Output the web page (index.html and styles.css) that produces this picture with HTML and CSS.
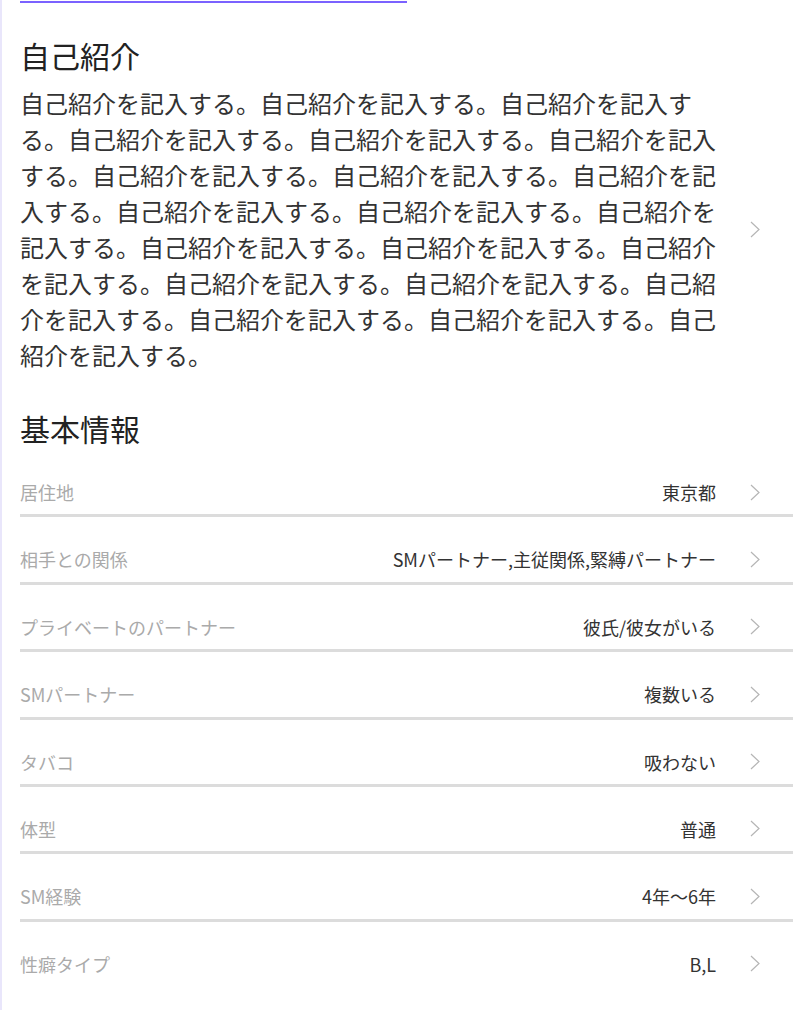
FILE: index.html
```html
<!DOCTYPE html>
<html lang="ja">
<head>
    <meta charset="UTF-8">
    <meta name="viewport" content="width=device-width, initial-scale=1.0">
    <title>プロフィール</title>
    <link rel="stylesheet" href="styles.css">
</head>
<body>
    <div class="page">
        <div class="tabs">
            <div class="tab active"></div>
            <div class="tab"></div>
        </div>

        <section class="intro">
            <h2>自己紹介</h2>
            <div class="intro-row">
                <p class="intro-text">自己紹介を記入する。自己紹介を記入する。自己紹介を記入する。自己紹介を記入する。自己紹介を記入する。自己紹介を記入する。自己紹介を記入する。自己紹介を記入する。自己紹介を記入する。自己紹介を記入する。自己紹介を記入する。自己紹介を記入する。自己紹介を記入する。自己紹介を記入する。自己紹介を記入する。自己紹介を記入する。自己紹介を記入する。自己紹介を記入する。自己紹介を記入する。自己紹介を記入する。自己紹介を記入する。</p>
                <svg class="chevron" viewBox="0 0 10 17"><polyline points="1,1 9,8.5 1,16"/></svg>
            </div>
        </section>

        <section class="basic">
            <h2>基本情報</h2>
            <ul class="info-list">
                <li class="info-row">
                    <span class="label">居住地</span>
                    <span class="value">東京都</span>
                    <svg class="chevron" viewBox="0 0 10 17"><polyline points="1,1 9,8.5 1,16"/></svg>
                </li>
                <li class="info-row">
                    <span class="label">相手との関係</span>
                    <span class="value">SMパートナー,主従関係,緊縛パートナー</span>
                    <svg class="chevron" viewBox="0 0 10 17"><polyline points="1,1 9,8.5 1,16"/></svg>
                </li>
                <li class="info-row">
                    <span class="label">プライベートのパートナー</span>
                    <span class="value">彼氏/彼女がいる</span>
                    <svg class="chevron" viewBox="0 0 10 17"><polyline points="1,1 9,8.5 1,16"/></svg>
                </li>
                <li class="info-row">
                    <span class="label">SMパートナー</span>
                    <span class="value">複数いる</span>
                    <svg class="chevron" viewBox="0 0 10 17"><polyline points="1,1 9,8.5 1,16"/></svg>
                </li>
                <li class="info-row">
                    <span class="label">タバコ</span>
                    <span class="value">吸わない</span>
                    <svg class="chevron" viewBox="0 0 10 17"><polyline points="1,1 9,8.5 1,16"/></svg>
                </li>
                <li class="info-row">
                    <span class="label">体型</span>
                    <span class="value">普通</span>
                    <svg class="chevron" viewBox="0 0 10 17"><polyline points="1,1 9,8.5 1,16"/></svg>
                </li>
                <li class="info-row">
                    <span class="label">SM経験</span>
                    <span class="value">4年〜6年</span>
                    <svg class="chevron" viewBox="0 0 10 17"><polyline points="1,1 9,8.5 1,16"/></svg>
                </li>
                <li class="info-row">
                    <span class="label">性癖タイプ</span>
                    <span class="value">B,L</span>
                    <svg class="chevron" viewBox="0 0 10 17"><polyline points="1,1 9,8.5 1,16"/></svg>
                </li>
            </ul>
        </section>
    </div>
</body>
</html>
```

FILE: styles.css
```css
:root {
    --accent-color: #7b62ff;
    --side-color: #e9e6fb;
    --heading-color: #222;
    --text-color: #333;
    --label-color: #aaa;
    --line-color: #dcdcdc;
    --chevron-color: #b5b5b5;
}

body {
    margin: 0;
    font-family: "Noto Sans CJK JP", "Noto Sans", sans-serif;
    background: #fff;
    color: var(--text-color);
}

.page {
    border-left: 2px solid var(--side-color);
    padding: 0 7px 0 18px;
    min-height: 1010px;
    box-sizing: border-box;
}

.tabs {
    display: flex;
    padding-top: 1px;
}

.tab {
    flex: 1;
    height: 2px;
}

.tab.active {
    background: var(--accent-color);
}

h2 {
    margin: 0;
    font-size: 30px;
    font-weight: 400;
    line-height: 36px;
    color: var(--heading-color);
}

.intro h2 {
    margin-top: 34px;
}

.intro-row {
    display: flex;
    align-items: center;
    padding-right: 33px;
    margin-top: 12px;
}

.intro-text {
    margin: 0;
    width: 700px;
    font-size: 24px;
    line-height: 36px;
    color: var(--text-color);
}

.intro-row .chevron {
    margin-left: 30px;
}

.basic h2 {
    margin-top: 37px;
}

.info-list {
    list-style: none;
    margin: 4px 0 0;
    padding: 0;
}

.info-row {
    display: flex;
    align-items: center;
    padding: 30px 33px 10.4px 0;
    border-bottom: 3px solid var(--line-color);
    font-size: 18px;
    line-height: 24px;
}

.info-row:last-child {
    border-bottom: none;
}

.label {
    flex: 1;
    color: var(--label-color);
}

.value {
    color: var(--text-color);
    margin-right: 34px;
}

.chevron {
    width: 10px;
    height: 17px;
    flex-shrink: 0;
}

.chevron polyline {
    fill: none;
    stroke: var(--chevron-color);
    stroke-width: 1.2;
}
```
